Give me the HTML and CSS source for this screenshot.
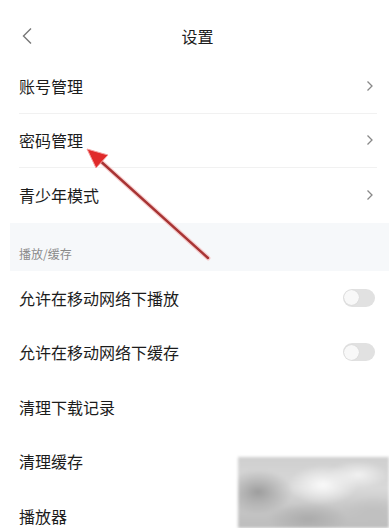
FILE: index.html
```html
<!DOCTYPE html>
<html lang="zh-CN">
<head>
<meta charset="utf-8">
<title>设置</title>
<link rel="stylesheet" href="styles.css">
</head>
<body>
<div class="page">
  <header class="header">
    <svg class="back" width="12" height="18" viewBox="0 0 12 18"><path d="M10 1.5 L2.5 9 L10 16.5" fill="none" stroke="#777" stroke-width="1.4"/></svg>
    <div class="title">设置</div>
  </header>
  <div class="group">
    <div class="row first"><span>账号管理</span><svg class="chev" width="8" height="12" viewBox="0 0 8 12"><path d="M1.5 1.5 L6 6 L1.5 10.5" fill="none" stroke="#888" stroke-width="1.3"/></svg></div>
    <div class="row"><span>密码管理</span><svg class="chev" width="8" height="12" viewBox="0 0 8 12"><path d="M1.5 1.5 L6 6 L1.5 10.5" fill="none" stroke="#888" stroke-width="1.3"/></svg></div>
    <div class="row last"><span>青少年模式</span><svg class="chev" width="8" height="12" viewBox="0 0 8 12"><path d="M1.5 1.5 L6 6 L1.5 10.5" fill="none" stroke="#888" stroke-width="1.3"/></svg></div>
  </div>
  <div class="section">播放/缓存</div>
  <div class="group">
    <div class="row plain"><span>允许在移动网络下播放</span><span class="toggle"><span class="knob"></span></span></div>
    <div class="row plain"><span>允许在移动网络下缓存</span><span class="toggle"><span class="knob"></span></span></div>
    <div class="row plain"><span>清理下载记录</span></div>
    <div class="row plain"><span>清理缓存</span></div>
    <div class="row plain"><span>播放器</span></div>
  </div>
  <svg class="arrow" width="389" height="528" viewBox="0 0 389 528">
    <line x1="208" y1="258" x2="97" y2="158" stroke="#f3b3b3" stroke-width="5" stroke-linecap="round" opacity="0.6"/>
    <line x1="208" y1="258" x2="97" y2="158" stroke="#a83434" stroke-width="2.4" stroke-linecap="round"/>
    <polygon points="87,149 108,155 96,168" fill="#e02a2a" stroke="#f5a0a0" stroke-width="1"/>
  </svg>
  <div class="mosaic"></div>
</div>
</body>
</html>
```
FILE: styles.css
```css
html, body {
  margin: 0;
  padding: 0;
  background: #ffffff;
}
body {
  font-family: "Noto Sans CJK SC", "Noto Sans", sans-serif;
  color: #1c1c1c;
  width: 389px;
  height: 528px;
  overflow: hidden;
}
.page {
  position: relative;
  width: 389px;
  height: 528px;
  overflow: hidden;
}
.header {
  height: 60px;
  display: flex;
  align-items: flex-start;
  justify-content: center;
  position: relative;
  padding-top: 24px;
  box-sizing: border-box;
}
.back {
  position: absolute;
  left: 21px;
  top: 27px;
}
.title {
  font-size: 16px;
  line-height: 24px;
  color: #1c1c1c;
  margin-left: 6px;
}
.group {
  display: flex;
  flex-direction: column;
}
.row {
  height: 54.5px;
  margin: 0 12px 0 19px;
  display: flex;
  align-items: center;
  justify-content: space-between;
  font-size: 16px;
  border-bottom: 1px solid #f1f1f1;
  box-sizing: border-box;
}
.row.first {
  height: 53.5px;
}
.row.last,
.row.plain {
  border-bottom: none;
}
.chev {
  margin-right: 3px;
}
.section {
  margin-left: 10px;
  height: 48px;
  background: #f6f8fa;
  font-size: 12px;
  color: #8a8a8a;
  padding-left: 9px;
  padding-top: 22px;
  box-sizing: border-box;
  line-height: 18px;
}
.toggle {
  width: 32px;
  height: 18px;
  border-radius: 9px;
  background: #e1e1e1;
  display: flex;
  align-items: center;
  padding: 0 1px;
  box-sizing: border-box;
  margin-right: 2px;
}
.knob {
  width: 15px;
  height: 15px;
  border-radius: 50%;
  background: #f8f8f8;
  box-shadow: 0 0 1px rgba(0,0,0,0.15);
}
.arrow {
  position: absolute;
  left: 0;
  top: 0;
  pointer-events: none;
}
.mosaic {
  position: absolute;
  left: 238px;
  top: 457px;
  width: 151px;
  height: 71px;
  background:
    radial-gradient(ellipse 35px 22px at 20px 35px, rgba(150,150,150,0.9), rgba(150,150,150,0) 100%),
    radial-gradient(ellipse 35px 20px at 85px 28px, rgba(250,250,250,1), rgba(250,250,250,0) 100%),
    radial-gradient(ellipse 30px 14px at 120px 18px, rgba(245,245,245,0.9), rgba(245,245,245,0) 100%),
    radial-gradient(ellipse 40px 16px at 70px 62px, rgba(165,165,165,0.8), rgba(165,165,165,0) 100%),
    radial-gradient(ellipse 30px 16px at 135px 55px, rgba(190,190,190,0.8), rgba(190,190,190,0) 100%),
    linear-gradient(180deg, #cfcfcf 0%, #d8d8d8 45%, #c4c4c4 75%, #bdbdbd 100%);
  filter: blur(1.5px);
}
```
